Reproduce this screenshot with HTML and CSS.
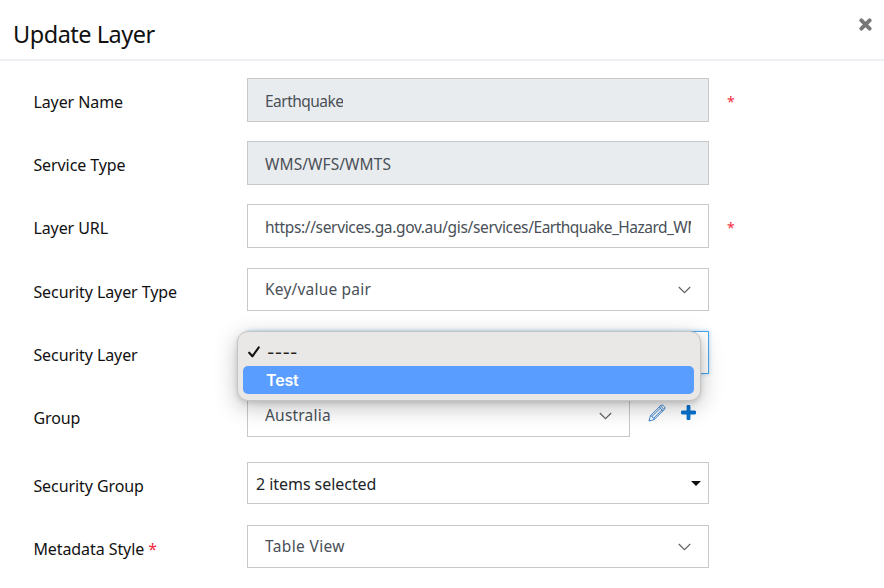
FILE: index.html
```html
<!DOCTYPE html>
<html lang="en">
<head>
<meta charset="utf-8">
<title>Update Layer</title>
<link rel="stylesheet" href="styles.css">
</head>
<body>
<header class="header">
  <h1 class="title">Update Layer</h1>
  <svg class="close" viewBox="0 0 12 12"><path d="M2.2 2.2 9.8 9.8M9.8 2.2 2.2 9.8"/></svg>
</header>
<main class="form">
  <div class="row">
    <span class="label">Layer Name</span>
    <div class="field disabled"><span class="value tight">Earthquake</span></div>
    <span class="required">*</span>
  </div>
  <div class="row">
    <span class="label">Service Type</span>
    <div class="field disabled"><span class="value caps">WMS/WFS/WMTS</span></div>
  </div>
  <div class="row">
    <span class="label">Layer URL</span>
    <div class="field"><span class="value link">https://services.ga.gov.au/gis/services/<span class="tight">Earthquake_Hazard_WMS</span></span></div>
    <span class="required">*</span>
  </div>
  <div class="row">
    <span class="label">Security Layer Type</span>
    <div class="field select"><span class="value">Key/value pair</span><svg class="chevron" viewBox="0 0 13 8"><path d="M.8 1 6.5 6.7 12.2 1"/></svg></div>
  </div>
  <div class="row">
    <span class="label">Security Layer</span>
    <div class="field select focused">
      <div class="menu">
        <div class="option"><svg class="check" viewBox="0 0 12 12"><path d="M1.2 6.7 4.4 10.3 10.8 1.3"/></svg><span class="dashes">----</span></div>
        <div class="option active"><span>Test</span></div>
      </div>
    </div>
  </div>
  <div class="row group">
    <span class="label">Group</span>
    <div class="field select short"><span class="value">Australia</span><svg class="chevron" viewBox="0 0 13 8"><path d="M.8 1 6.5 6.7 12.2 1"/></svg></div>
    <svg class="pencil" viewBox="0 0 18 18"><path d="M1 17 2.4 11.8 12.7 1.5Q14 .4 15.2 1.5L16.5 2.8Q17.6 4 16.5 5.3L6.2 15.6ZM2.4 11.8 4.1 12.2 4.5 13.5 5.9 13.9 6.2 15.6M11.2 3 15 6.8M12.4 1.8 16.2 5.6M4.1 12.2 12.8 3.8M5.9 13.9 14.5 5.4M1.4 15.6 2.4 16.6"/></svg>
    <svg class="plus" viewBox="0 0 14 14"><path d="M7 1.5V12.5M1.5 7H12.5"/></svg>
  </div>
  <div class="row">
    <span class="label">Security Group</span>
    <div class="field multi"><span class="value">2 items selected</span><svg class="caret" viewBox="0 0 10 5"><path d="M0 0H10L5 5Z"/></svg></div>
  </div>
  <div class="row">
    <span class="label">Metadata Style <span class="star">*</span></span>
    <div class="field select"><span class="value wide">Table View</span><svg class="chevron" viewBox="0 0 13 8"><path d="M.8 1 6.5 6.7 12.2 1"/></svg></div>
  </div>
</main>
</body>
</html>
```
FILE: styles.css
```css
* { box-sizing: border-box; }
body {
  margin: 0;
  height: 588px;
  overflow: hidden;
  background: #fff;
  color: #111;
  font: 16px/22px "Noto Sans", "Open Sans", sans-serif;
}
.header {
  display: flex;
  justify-content: space-between;
  height: 61px;
  padding: 18px 12px 0 13px;
  border-bottom: 2px solid #eff0f3;
}
.title { margin: 0; font-size: 23.5px; line-height: 32px; font-weight: 400; letter-spacing: -.48px; }
.close { width: 13px; height: 13px; fill: none; stroke: #777; stroke-width: 3.6; stroke-linecap: round; }
.form { padding: 17px 0 0 33px; }
.row { display: flex; height: 63.2px; }
.row.group { height: 68px; }
.label { width: 214px; padding: 13px 0 0 .4px; white-space: nowrap; letter-spacing: -.08px; }
.field {
  display: flex;
  position: relative;
  width: 462px;
  height: 44px;
  padding: 11px 17px 0;
  border: 1px solid #c6c8c9;
  color: #495057;
  font-size: 15.5px;
}
.disabled { background: #e9ecef; }
.select { height: 43px; padding-top: 9px; justify-content: space-between; letter-spacing: .2px; }
.short { width: 383px; }
.multi { height: 42px; padding: 10px 7px 0 8px; justify-content: space-between; color: #212529; font-size: 16px; letter-spacing: -.05px; }
.focused { border-color: #4da6ec; box-shadow: 0 0 4px #a9d5f8; }
.value { overflow: hidden; white-space: nowrap; }
.link { letter-spacing: -.35px; }
.tight { letter-spacing: -.53px; }
.caps { letter-spacing: .08px; }
.wide { letter-spacing: .35px; }
.chevron { width: 13px; height: 8px; margin-top: 8px; fill: none; stroke: #666; stroke-width: 1.3; }
.caret { width: 10px; height: 5px; margin-top: 8px; fill: #111; }
.required { margin: 13px 0 0 18px; color: #f22c3d; font-size: 14px; }
.star { color: #f22c3d; }
.pencil { width: 18px; height: 18px; margin: 10px 0 0 18px; fill: none; stroke: #3c87d2; stroke-width: 1; }
.plus { width: 15px; height: 15px; margin: 11px 0 0 15px; fill: none; stroke: #0871cc; stroke-width: 3.6; stroke-linecap: round; }
.menu {
  position: absolute;
  z-index: 2;
  top: -1px;
  left: -11px;
  width: 464px;
  height: 70px;
  padding: 6px 6px 6px 5px;
  border: 1px solid #c5c4c2;
  border-radius: 11px;
  background: #e9e8e6;
  box-shadow: 0 6px 22px rgba(0, 0, 0, .25), 0 2px 5px rgba(0, 0, 0, .12);
  color: #222;
  font: 500 16px/28px Inter, sans-serif;
  letter-spacing: 0;
}
.option { display: flex; height: 28px; padding-left: 5px; align-items: center; border-radius: 5px; }
.check { width: 12px; height: 12px; margin: 1px 7px 0 0; fill: none; stroke: #111; stroke-width: 2.1; stroke-linecap: round; stroke-linejoin: round; }
.dashes { letter-spacing: .3px; }
.active { padding-left: 23px; background: #589dff; color: #fff; font-weight: 600; letter-spacing: -.15px; }
```
